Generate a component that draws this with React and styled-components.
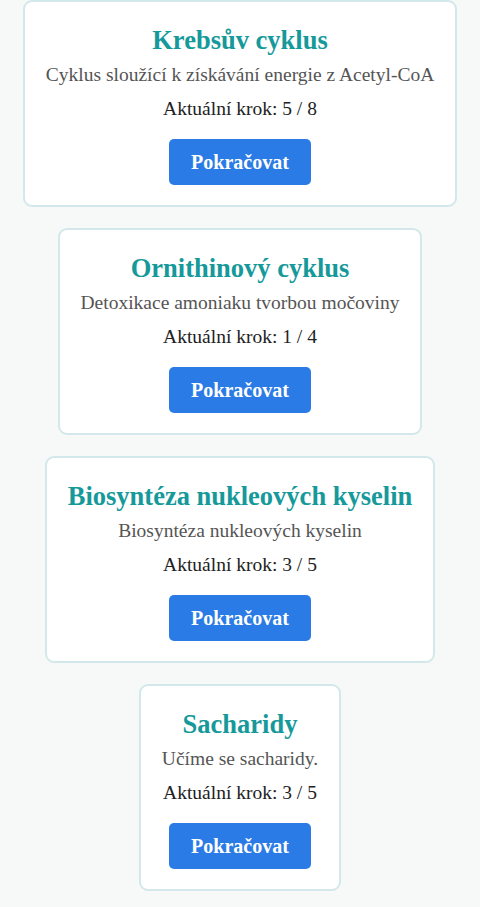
import styled, { createGlobalStyle } from 'styled-components';

const GlobalStyle = createGlobalStyle`
  html, body {
    margin: 0;
    padding: 0;
    background: #f7f8f8;
    font-family: "Liberation Serif", "Times New Roman", serif;
  }
`;

const cycles = [
    { title: "Krebsův cyklus", description: "Cyklus sloužící k získávání energie z Acetyl-CoA", step: 5, total: 8 },
    { title: "Ornithinový cyklus", description: "Detoxikace amoniaku tvorbou močoviny", step: 1, total: 4 },
    { title: "Biosyntéza nukleových kyselin", description: "Biosyntéza nukleových kyselin", step: 3, total: 5 },
    { title: "Sacharidy", description: "Učíme se sacharidy.", step: 3, total: 5 },
];

const App = () => {
    return (
        <>
            <GlobalStyle />
            <List>
                {cycles.map((c) => (
                    <Card key={c.title}>
                        <Title>{c.title}</Title>
                        <Description>{c.description}</Description>
                        <Step>Aktuální krok: {c.step} / {c.total}</Step>
                        <Button>Pokračovat</Button>
                    </Card>
                ))}
            </List>
        </>
    );
};

const List = styled.div`
  display: flex;
  flex-direction: column;
  align-items: center;
  gap: 21px;
  padding: 0 0 20px;
`;

const Card = styled.div`
  display: flex;
  flex-direction: column;
  align-items: center;
  background: #fff;
  border: 2px solid #d2e8ea;
  border-radius: 9px;
  padding: 22px 21px 20px;
  text-align: center;
`;

const Title = styled.h2`
  margin: 0;
  color: #15999a;
  font-size: 26.5px;
  font-weight: bold;
  line-height: 32px;
`;

const Description = styled.p`
  margin: 8px 0 0;
  color: #555;
  font-size: 19.5px;
  line-height: 21px;
`;

const Step = styled.p`
  margin: 13px 0 0;
  color: #222;
  font-size: 19.5px;
  line-height: 21px;
`;

const Button = styled.button`
  margin-top: 20px;
  width: 142px;
  height: 46px;
  background: #2b7be6;
  color: #fff;
  border: none;
  border-radius: 5px;
  font-family: "Liberation Serif", "Times New Roman", serif;
  font-size: 20px;
  font-weight: bold;
  cursor: pointer;
`;

export default App;
